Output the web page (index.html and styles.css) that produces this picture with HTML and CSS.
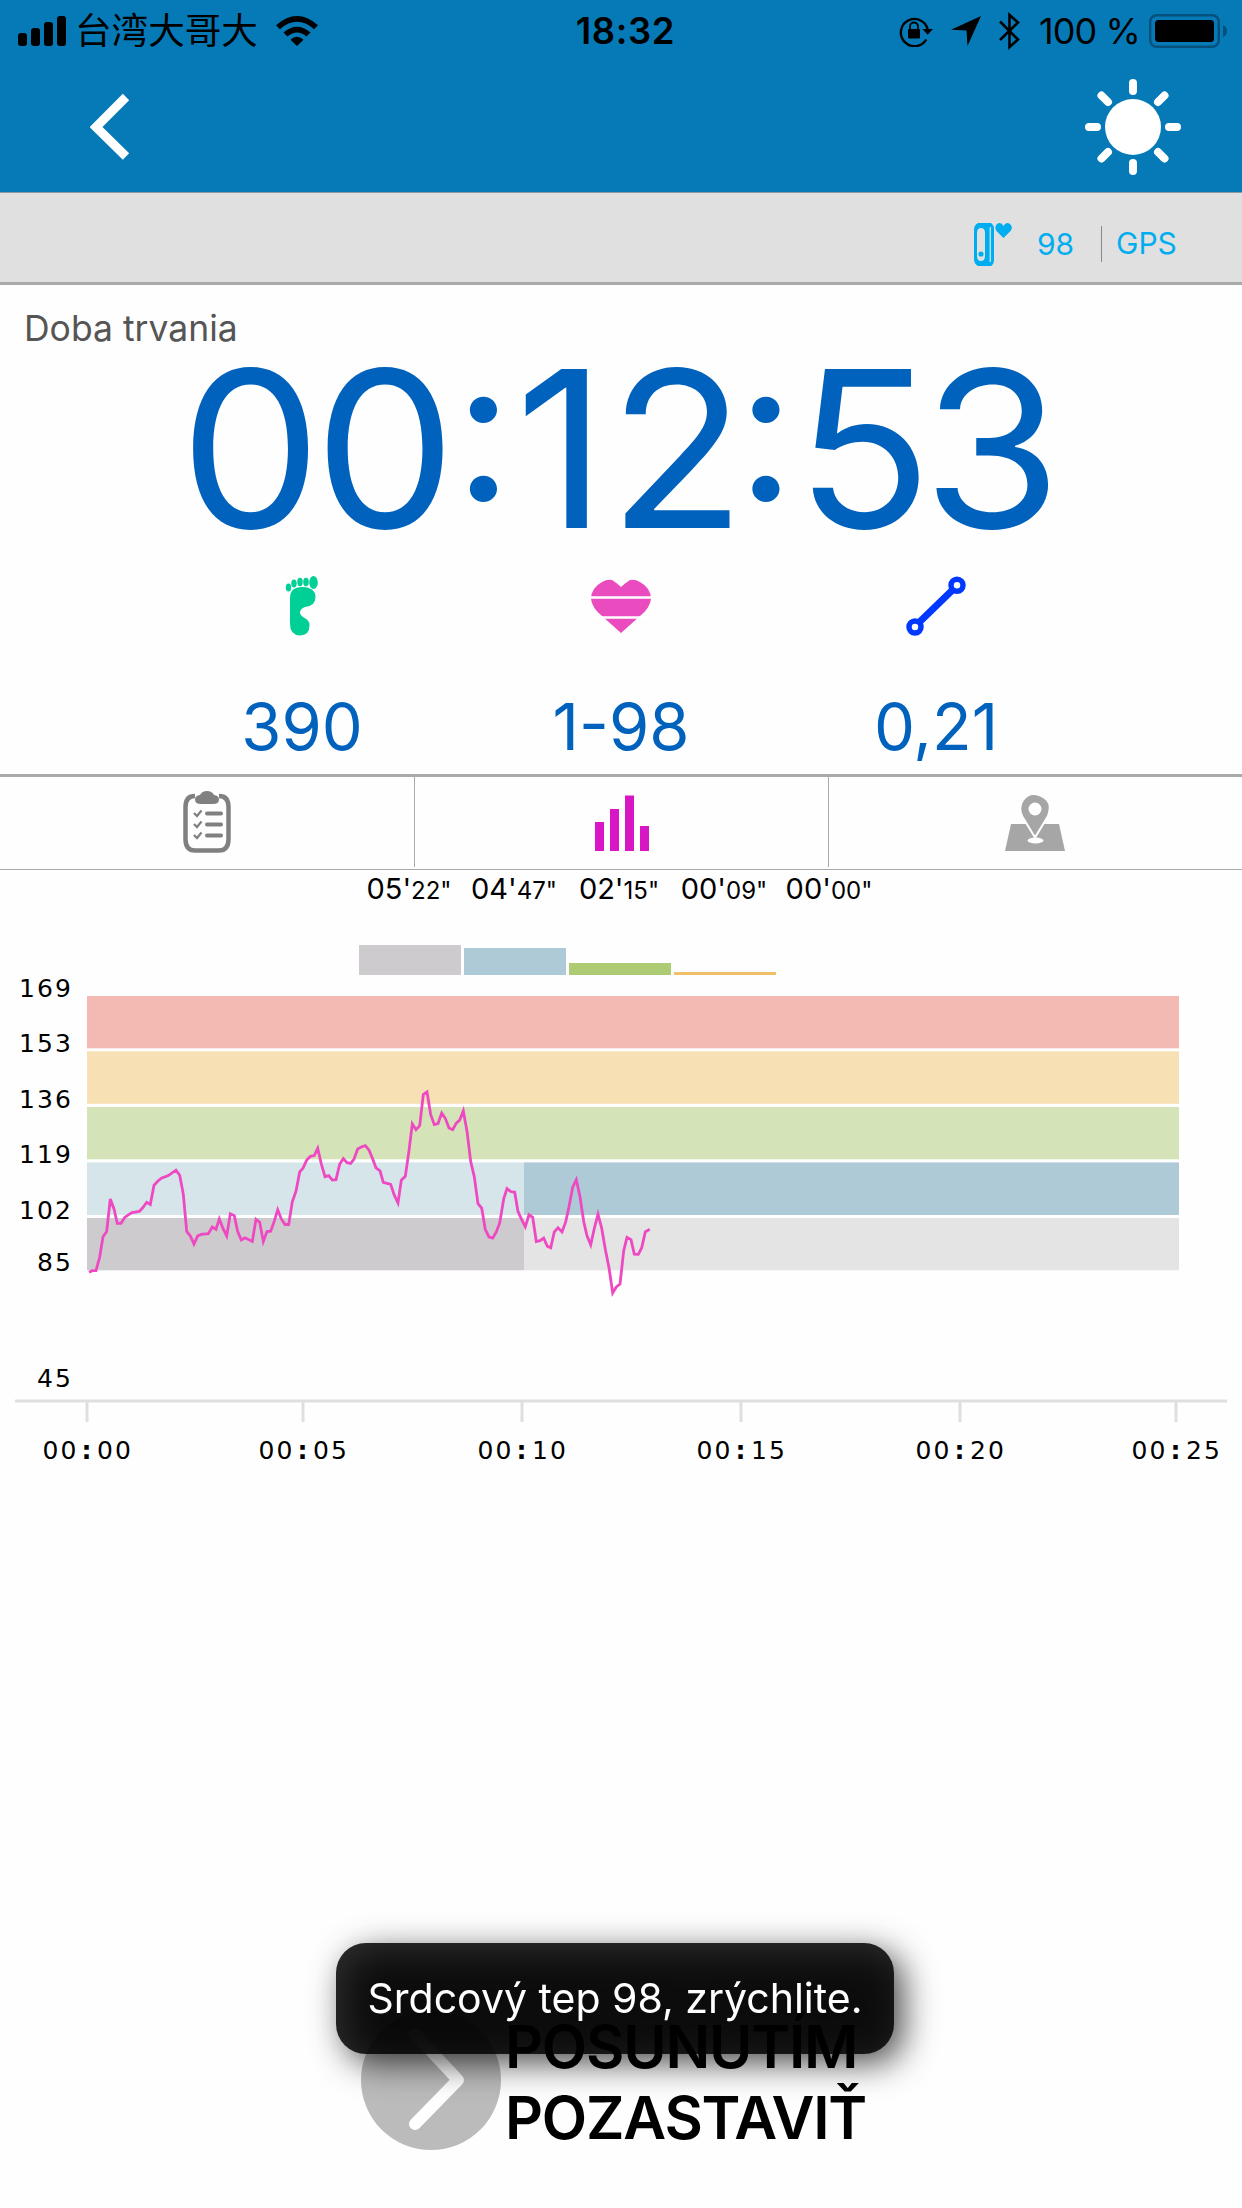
FILE: index.html
```html
<!DOCTYPE html>
<html lang="sk">
<head>
    <meta charset="UTF-8">
    <meta name="viewport" content="width=device-width, initial-scale=1.0">
    <title>Tréning</title>
    <link rel="stylesheet" href="styles.css">
</head>
<body>
    <div class="screen">
        <header class="header">
            <div class="status">
                <div class="status-left">
                    <svg class="signal" width="50" height="30" viewBox="0 0 50 30">
                        <rect x="0" y="17" width="9" height="13" rx="3"/>
                        <rect x="13" y="12" width="9" height="18" rx="3"/>
                        <rect x="26" y="6" width="9" height="24" rx="3"/>
                        <rect x="39" y="0" width="9" height="30" rx="3"/>
                    </svg>
                    <span class="carrier">台湾大哥大</span>
                    <svg class="wifi" width="42" height="30" viewBox="0 0 42 30">
                        <path d="M0 9.200Q21 -9.200 42 9.200L38 13.200Q21 -1.500 4 13.200Z"/>
                        <path d="M7.500 16.500Q21 5 34.500 16.500L30.500 20.500Q21 12.500 11.500 20.500Z"/>
                        <path d="M14.500 23.700Q21 18 27.500 23.700L21 30Z"/>
                    </svg>
                </div>
                <div class="clock">18:32</div>
                <div class="status-right">
                    <svg width="34" height="32" viewBox="0 0 34 32">
                        <path d="M27.200 24.500A13.600 13.600 0 1 1 28.600 14" fill="none" stroke="#000" stroke-width="2.400"/>
                        <path d="M23.500 14H34L28.700 19.800Z"/>
                        <rect x="9" y="14" width="12" height="9.500" rx="1.200"/>
                        <path d="M11 15V11.500a4 4 0 0 1 8 0V15" fill="none" stroke="#000" stroke-width="1.800"/>
                    </svg>
                    <svg class="locate" width="30" height="30" viewBox="0 0 30 30"><path d="M30 0L0 13.800L15.500 14.500L16.500 30Z"/></svg>
                    <svg class="bluetooth" width="21" height="38" viewBox="0 0 21 38">
                        <path d="M1 9.500L19 27.500L10.500 35V3L19 10.500L1 28" fill="none" stroke="#000" stroke-width="2.600"/>
                    </svg>
                    <span class="percent">100 %</span>
                    <svg width="79" height="34" viewBox="0 0 79 34">
                        <rect x="1.200" y="1.200" width="68.600" height="31.600" rx="6.500" fill="none" stroke="#05507c" stroke-width="2.400"/>
                        <rect x="6" y="6" width="59" height="22" rx="3.500"/>
                        <path d="M74 11Q78 12.500 78 17T74 23Z" fill="#05507c"/>
                    </svg>
                </div>
            </div>
            <div class="nav">
                <svg width="40" height="68" viewBox="0 0 40 68"><path d="M36 4L6 34L36 63.500" fill="none" stroke="#fff" stroke-width="9"/></svg>
                <svg width="96" height="96" viewBox="-48 -48 96 96">
                    <circle r="28" fill="#fff"/>
                    <g stroke="#fff" stroke-width="8" stroke-linecap="round">
                        <path d="M0 -44V-36M0 44V36M-44 0H-36M44 0H36M-31.500 -31.500L-25 -25M31.500 -31.500L25 -25M-31.500 31.500L-25 25M31.500 31.500L25 25"/>
                    </g>
                </svg>
            </div>
        </header>

        <div class="sensors">
            <svg width="40" height="43" viewBox="0 0 40 43" fill="#00aeef">
                <path fill-rule="evenodd" d="M4 0H17Q20 2 20 6V37Q20 41 17 43H4Q0 41 0 36V7Q0 2 4 0ZM7 5Q3 5 3 10V33Q3 38 7 38T11 33V10Q11 5 7 5Z"/>
                <path d="M16.300 4V39" stroke="#b5dfee" stroke-width="1.500"/>
                <circle cx="7" cy="31" r="2.600"/>
                <path d="M29.500 15L22.500 8Q20 4 23 1Q27 -1.500 29.500 3Q32 -1.500 36 1Q39.500 4 36.500 8Z"/>
            </svg>
            <span class="sensor-rate">98</span>
            <span class="sensor-gps">GPS</span>
        </div>

        <section class="duration">
            <div class="duration-label">Doba trvania</div>
            <div class="duration-time"><span class="hours">00</span><span class="colon">:</span><span class="minutes">12</span><span class="colon">:</span><span class="seconds">53</span></div>
        </section>

        <section class="stats">
            <div class="stat">
                <svg width="60" height="60" viewBox="0 0 60 60" fill="#00cf96">
                    <ellipse cx="16.500" cy="11.500" rx="2.700" ry="4"/>
                    <ellipse cx="22" cy="7.500" rx="2.700" ry="4"/>
                    <ellipse cx="28" cy="6" rx="2.700" ry="4.200"/>
                    <ellipse cx="34" cy="6" rx="2.800" ry="4.200"/>
                    <ellipse cx="41.500" cy="6.500" rx="4.300" ry="6.500"/>
                    <path d="M18 22Q18 11 30.500 11Q43.500 11.500 43.500 21Q43.500 30 33 31Q28 32.500 28 37Q28 39 31 41Q37.500 44 37.500 49Q37.500 59.500 28 59.500Q18 59 18 48Z"/>
                </svg>
                <span>390</span>
            </div>
            <div class="stat">
                <svg width="60" height="60" viewBox="0 0 60 60">
                    <path d="M30 11Q26 7 21 4Q16 3 11 6Q0 12 0 23Q1 32 11 40L30 57L49 40Q59 32 60 23Q60 12 49 6Q44 3 39 4Q34 7 30 11Z" fill="#ea4cc0"/>
                    <path d="M0 21.500H60M0 41.500H60" stroke="#fff" stroke-width="2.600"/>
                </svg>
                <span>1-98</span>
            </div>
            <div class="stat">
                <svg width="60" height="60" viewBox="0 0 60 60" fill="none" stroke="#0038ff">
                    <path d="M13.500 46L46.500 14" stroke-width="7"/>
                    <circle cx="9" cy="51" r="6" stroke-width="5.500"/>
                    <circle cx="51" cy="9.200" r="6" stroke-width="5.500"/>
                </svg>
                <span>0,21</span>
            </div>
        </section>

        <nav class="tabs">
            <div class="tab">
                <svg width="48" height="62" viewBox="0 0 48 62" fill="none" stroke="#808080">
                    <path d="M12 5Q2.500 5 2.500 16V48Q2.500 59.500 12 59.500H36Q45.500 59.500 45.500 48V16Q45.500 5 36 5" stroke-width="4.500"/>
                    <path d="M18 13Q12 13 12 8.500Q12 4.500 17 4Q19 0 24 0T31 4Q36 4.500 36 8.500Q36 13 30 13Z" fill="#808080" stroke="none"/>
                    <path d="M24 22.500H38M24 33.500H38M24 44.500H38" stroke-width="4" stroke-linecap="round"/>
                    <path d="M11 22L14 25L18.500 19.500M11 33L14 36L18.500 30.500M11 44L14 47L18.500 41.500" stroke-width="2.200"/>
                </svg>
            </div>
            <div class="tab">
                <svg width="54" height="57" viewBox="0 0 54 57" fill="#d916c6">
                    <rect x="0" y="28" width="9" height="29"/>
                    <rect x="15" y="15" width="9" height="42"/>
                    <rect x="30" y="1.500" width="9" height="55.500"/>
                    <rect x="45" y="32" width="9" height="25"/>
                </svg>
            </div>
            <div class="tab">
                <svg class="map" width="60" height="57" viewBox="0 0 60 57" fill="#a6a6a6">
                    <path d="M6 30H54L60 57H0Z"/>
                    <path d="M30 43.500L17 22Q13 13 18 6T30 0T42 6T43 22Z" stroke="#fff" stroke-width="2"/>
                    <circle cx="30" cy="15" r="6.500" fill="#fff"/>
                    <ellipse cx="30.500" cy="46.500" rx="8" ry="3" fill="#fff"/>
                    <path d="M30 41V46" stroke="#fff" stroke-width="2"/>
                </svg>
            </div>
        </nav>

        <section class="zones">
            <div class="zone"><span>05'<small>22"</small></span><i class="bar rest"></i></div>
            <div class="zone"><span>04'<small>47"</small></span><i class="bar warm"></i></div>
            <div class="zone"><span>02'<small>15"</small></span><i class="bar fat"></i></div>
            <div class="zone"><span>00'<small>09"</small></span><i class="bar aero"></i></div>
            <div class="zone"><span>00'<small>00"</small></span></div>
        </section>

        <svg class="chart" width="1242" height="495" viewBox="0 975 1242 495">
            <!-- heart rate zones -->
            <rect x="87" y="996" width="1092" height="52.300" fill="#f3b9b3"/>
            <rect x="87" y="1051.300" width="1092" height="52.500" fill="#f7e0b4"/>
            <rect x="87" y="1107" width="1092" height="52.300" fill="#d5e4b8"/>
            <rect x="87" y="1162.400" width="437" height="52.600" fill="#d6e5ea"/>
            <rect x="524" y="1162.400" width="655" height="52.600" fill="#adcad6"/>
            <rect x="87" y="1218" width="437" height="52.300" fill="#cdcbce"/>
            <rect x="524" y="1218" width="655" height="52.300" fill="#e4e4e4"/>

            <!-- axis -->
            <path d="M15 1401H1227M87 1402V1422M303 1402V1422M522 1402V1422M741 1402V1422M960 1402V1422M1176 1402V1422" stroke="#dfdfdf" stroke-width="3"/>

            <g class="axis-text">
                <text x="19 37 55" y="997">169</text>
                <text x="19 37 55" y="1052">153</text>
                <text x="19 37 55" y="1108">136</text>
                <text x="19 37 55" y="1163">119</text>
                <text x="19 37 55" y="1219">102</text>
                <text x="37 55" y="1271">85</text>
                <text x="37 55" y="1387">45</text>

                <text x="42.500 60.500 81.500 97 115" y="1459">00<tspan>:</tspan>00</text>
                <text x="258.500 276.500 297.500 313 331" y="1459">00<tspan>:</tspan>05</text>
                <text x="477.500 495.500 516.500 532 550" y="1459">00<tspan>:</tspan>10</text>
                <text x="696.500 714.500 735.500 751 769" y="1459">00<tspan>:</tspan>15</text>
                <text x="915.500 933.500 954.500 970 988" y="1459">00<tspan>:</tspan>20</text>
                <text x="1131.500 1149.500 1170.500 1186 1204" y="1459">00<tspan>:</tspan>25</text>
            </g>

            <polyline fill="none" stroke="#ee49c2" stroke-width="2.800" points="
                89,1272.2 92.3,1270.7 96,1270.7 99.7,1257 103,1236.7 106.7,1231.5 110.3,1199 114,1208.9 117.3,1223.3 121,1223.3
                124.7,1217.4 128.3,1214.8 132,1212.6 139.3,1211.5 142.7,1207.8 146.7,1202.3 150.3,1204.5 154,1185.2 157.7,1181.2 161.3,1178.2
                168.3,1175.6 176,1170.1 179.7,1175.2 183.3,1194.1 186.7,1231.5 190.3,1235.9 194,1244.1 197.7,1235.9 201.3,1234.4 208.3,1233.7
                212.3,1227 216,1229.3 219.3,1218.9 223,1228.5 226.7,1235.9 230.3,1213.7 234.3,1215.6 237.7,1231.5 241.3,1240 245,1237.8
                252.3,1241.5 256,1219.3 259.7,1222.2 263.3,1241.5 267,1231.5 270.7,1231.1 274.3,1221.1 277.7,1209.7 281.3,1218.9 285,1224.5
                288.7,1224.5 292.3,1201.9 296,1191.2 299.7,1171.9 303,1168.2 306.7,1160.1 310.3,1156.4 314.3,1155.6 317.7,1148.2 321.3,1163.8
                325,1176.7 328.7,1175.6 332.3,1180.1 336,1179.7 339.7,1164.2 343.3,1158.6 347,1162.7 350.7,1163.4 354,1159 357.7,1149
                361.7,1146.8 365.3,1145.7 369,1150.1 372.3,1157.9 376,1167.8 380,1170.8 383.3,1182.3 390.7,1184.5 394.3,1195.2 398,1203
                401.3,1180.1 405.3,1176.4 409,1150.8 412.3,1123.8 416,1129.7 419.7,1125.7 423.3,1094.6 427,1092 430.7,1114.6 434.3,1124.6
                438,1123.5 441.7,1113.1 445.3,1118.3 449,1127.9 452.7,1129.7 456.3,1123.1 459.7,1120.1 463.3,1110.9 467,1131.2 470.7,1161.6
                474.3,1176.7 478,1203.7 481.7,1208.2 485.3,1229.6 489,1237 492.7,1238.1 496.3,1231.9 499.7,1223 503.7,1198.9 507,1188.6
                510.7,1191.5 514.7,1192.3 518,1211.5 521.7,1219.6 525.3,1226.7 529,1214.8 532.7,1217.4 536.3,1241.5 540,1240.7 543.7,1238.1
                547.3,1246.3 550.7,1247.8 554.3,1231.9 558,1227.8 562,1231.9 565.7,1221.9 569,1206.7 572.7,1187.1 576.3,1179.7 580,1196.7
                583.7,1221.5 587,1235.9 590.7,1244.8 594.3,1228.5 598,1214.1 601.7,1228.2 605.3,1249.2 609,1267.7 612.7,1292.9 616.3,1287
                620,1284 623.7,1250.7 627,1237.4 631,1239.6 634.3,1254.1 638.3,1254.4 641.7,1247.8 645.3,1231.9 649.7,1229.3"/>
        </svg>

        <footer class="pause">
            <svg width="140" height="140" viewBox="0 0 140 140">
                <circle cx="70" cy="70" r="70" fill="#bbb"/>
                <path d="M54 24L97 70L54 114" fill="none" stroke="#fff" stroke-width="12" stroke-linecap="round" stroke-linejoin="round"/>
            </svg>
            <div class="pause-text">POSUNUTÍM<br>POZASTAVIŤ</div>
        </footer>

        <div class="toast">Srdcový tep 98, zrýchlite.</div>
    </div>
</body>
</html>
```
FILE: styles.css
```css
* { box-sizing: border-box; }
body { margin: 0; background: #fff; font-family: Inter, "Liberation Sans", sans-serif; color: #000; }
svg { display: block; flex: none; }
.screen { position: relative; display: flex; flex-direction: column; width: 1242px; height: 2208px; overflow: hidden; background: #fefefe; }

.header { height: 193px; background: #067ab7; border-bottom: 1px solid #8a9aa3; }
.status { display: grid; grid-template-columns: 1fr 110px 1fr; align-items: center; height: 60px; font-size: 36px; line-height: 60px; padding: 0 14px 0 18px; }
.status-left, .status-right { display: flex; align-items: center; }
.status-right { justify-content: flex-end; }
.carrier { font-family: "Noto Sans CJK TC", sans-serif; font-weight: 400; font-size: 36.6px; line-height: 56px; height: 60px; margin: 0 18px 0 7px; }
.clock { font-weight: 600; font-size: 36.5px; text-align: center; letter-spacing: 0.6px; padding-left: 5px; white-space: nowrap; }
.locate { margin: 0 18px; }
.percent { margin: 0 9px 0 19px; padding-top: 1px; letter-spacing: -0.9px; }
.nav { display: flex; justify-content: space-between; align-items: center; height: 132px; padding: 1px 61px 0 90px; }

.sensors { display: flex; align-items: center; height: 92px; padding: 13px 65px 0 974px; background: #e0e0e0; border-bottom: 3px solid #aaa; color: #00aeef; font-size: 30px; }
.sensor-rate { margin-left: 23px; width: 64px; }
.sensor-gps { border-left: 1px solid #888; height: 36px; line-height: 34px; padding-left: 14px; }

.duration { height: 291px; color: #0062bd; }
.duration-label { padding: 22px 0 0 24px; color: #555; font-size: 35.5px; line-height: 44px; }
.duration-time { width: 1232px; font-size: 218px; line-height: 200px; margin-top: -2px; text-align: center; transform: scaleX(1.03); }
.hours { letter-spacing: -7px; margin-right: 5px; }
.minutes { letter-spacing: 2px; margin: 0 -11px 0 7px; }
.seconds { letter-spacing: -9px; margin-left: 5px; }
.colon { font-size: 200px; line-height: 0; vertical-align: 27px; letter-spacing: -5px; }

.stats { display: grid; grid-template-columns: 324px 314px 316px; padding-left: 140px; height: 198px; color: #0062bd; font-size: 65px; }
.stat { display: flex; flex-direction: column; align-items: center; }
.stat span { line-height: 80px; margin-top: 51px; }

.tabs { display: grid; grid-template-columns: 1fr 1fr 1fr; height: 96px; border-top: 3px solid #aaa; border-bottom: 1px solid #aaa; }
.tab { display: flex; justify-content: center; align-items: center; height: 90px; }
.tab + .tab { border-left: 1px solid #aaa; }
.map { margin-right: 2px; }

.zones { display: grid; grid-template-columns: repeat(5, 102px); gap: 3px; height: 105px; padding-left: 359px; font-size: 29px; }
.zone { display: flex; flex-direction: column; justify-content: space-between; align-items: center; white-space: nowrap; }
.zone span { line-height: 38px; margin-right: 2px; }
.zone small { font-size: 24px; }
.bar { width: 102px; }
.rest { height: 30px; background: #cdcbce; }
.warm { height: 27px; background: #adcad6; }
.fat { height: 12px; background: #adcb72; }
.aero { height: 3px; background: #f0c068; }

.axis-text { font-family: "DejaVu Sans", sans-serif; font-size: 25px; }
.axis-text tspan { font-weight: bold; }

.pause { display: flex; margin-top: auto; padding: 0 0 58px 361px; }
.pause-text { margin: 1px 0 -6px 4px; font-size: 59px; line-height: 71px; font-weight: 600; letter-spacing: -1.2px; white-space: nowrap; }

.toast { position: absolute; left: 336px; top: 1943px; width: 558px; height: 111px; border-radius: 30px; background: rgba(0, 0, 0, 0.83); filter: drop-shadow(9px 9px 17px rgba(0, 0, 0, 0.85)); color: #fff; font-size: 41px; line-height: 111px; text-align: center; white-space: nowrap; }
```
